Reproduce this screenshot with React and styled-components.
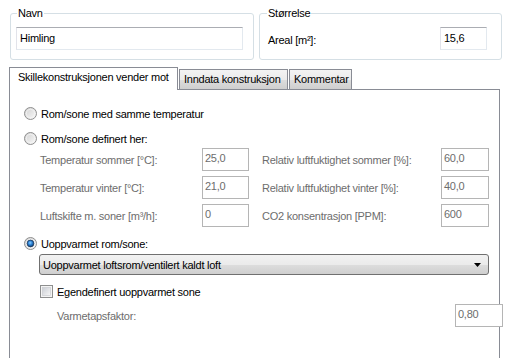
import {Fragment} from 'react'
import styled, {createGlobalStyle} from 'styled-components'

const GlobalStyle = createGlobalStyle`
  html, body {
    margin: 0;
    background: #ffffff;
  }
  body {
    font-family: 'Liberation Sans', Arial, sans-serif;
    font-size: 11px;
    letter-spacing: -0.25px;
    color: #000000;
  }
`

// --- Layout ---
const Page = styled.div`
  width: 516px;
  height: 358px;
  overflow: hidden;
  padding-left: 9px;
  box-sizing: border-box;
`

const TopRow = styled.div`
  display: flex;
  gap: 5px;
  margin-left: 1px;
`

const GroupBox = styled.fieldset`
  margin: 6px 0 0;
  padding: 7px ${({$padRight}) => $padRight}px 9px ${({$padLeft}) => $padLeft}px;
  width: ${({$w}) => $w}px;
  min-width: 0;
  box-sizing: border-box;
  border: 1px solid #d5dfe5;
  border-radius: 3px;
`

const Legend = styled.legend`
  margin-left: ${({$offset}) => $offset}px;
  padding: 0 1px;
  line-height: 14px;
  font-size: 11px;
`

const FieldRow = styled.div`
  display: flex;
  align-items: center;
  justify-content: space-between;
`

const Label = styled.span`
  white-space: nowrap;
  color: ${({$disabled}) => ($disabled ? '#6d6d6d' : '#000000')};
  padding-left: ${({$indent}) => $indent || 0}px;
  margin-top: ${({$drop}) => $drop || 0}px;
`

const TextBox = styled.div`
  width: ${({$w}) => $w}px;
  height: 23px;
  box-sizing: border-box;
  background: #ffffff;
  border: 1px solid;
  border-color: ${({$disabled}) =>
    $disabled ? '#b5b5b5' : '#abadb3 #e3e9ef #e3e9ef #e2e3ea'};
  color: ${({$disabled}) => ($disabled ? '#6d6d6d' : '#000000')};
  padding: ${({$disabled}) => ($disabled ? '3px 0 0 2px' : '0 0 0 3px')};
  line-height: ${({$disabled}) => ($disabled ? '13px' : '21px')};
  white-space: nowrap;
`

// --- Tabs ---
const TabStrip = styled.div`
  display: flex;
  align-items: flex-end;
  margin-top: 7px;
  height: 22px;
`

const Tab = styled.div`
  position: relative;
  width: ${({$w}) => $w}px;
  box-sizing: border-box;
  border: 1px solid #898c95;
  border-bottom: none;
  white-space: nowrap;
  ${({$active}) =>
    $active
      ? `
    height: 23px;
    margin-bottom: -1px;
    z-index: 1;
    background: #ffffff;
    padding: 3px 0 0 8px;
  `
      : `
    height: 20px;
    background: linear-gradient(#f3f3f3 0%, #ebebeb 50%, #dddddd 51%, #cfcfcf 100%);
    padding: 3px 0 0 4px;
    margin-left: 1px;
  `}
`

const TabPanel = styled.div`
  border: 1px solid #898c95;
  width: 491px;
  height: 300px;
  box-sizing: border-box;
  padding: 17px 0 0 14px;
  display: flex;
  flex-direction: column;
`

const OptionRow = styled.div`
  display: flex;
  align-items: center;
  gap: 4px;
  height: 13px;
  margin-top: ${({$mt}) => $mt || 0}px;
  margin-left: ${({$ml}) => $ml || 0}px;
`

const FieldGrid = styled.div`
  display: grid;
  grid-template-columns: 162px 47px 192px 48px;
  grid-auto-rows: 23px;
  row-gap: 5px;
  align-items: center;
  margin: 3px 0 0 16px;
`

const Dropdown = styled.div`
  display: flex;
  align-items: center;
  justify-content: space-between;
  width: 450px;
  height: 21px;
  box-sizing: border-box;
  margin: 4px 0 0 15px;
  padding: 0 7px 0 3px;
  border: 1px solid #707070;
  border-radius: 3px;
  background: linear-gradient(#f2f2f2 0%, #ebebeb 50%, #dddddd 51%, #cfcfcf 100%);
`

const FactorRow = styled.div`
  display: flex;
  align-items: center;
  justify-content: space-between;
  width: 446px;
  margin: 6px 0 0 33px;
`

// --- Icons ---
const Radio = ({checked}) => (
  <svg width="13" height="13" viewBox="0 0 13 13">
    <defs>
      <linearGradient id="radioFill" x1="0" y1="0" x2="1" y2="1">
        <stop offset="0" stopColor="#cfcfcf" />
        <stop offset="1" stopColor="#fbfbfb" />
      </linearGradient>
      <radialGradient id="radioDot" cx="0.45" cy="0.4" r="0.6">
        <stop offset="0" stopColor="#8ad0ff" />
        <stop offset="0.5" stopColor="#2a7fd4" />
        <stop offset="1" stopColor="#0e3a6b" />
      </radialGradient>
    </defs>
    <circle cx="6.5" cy="6.5" r="6" fill="url(#radioFill)" stroke="#8f8f8f" />
    <circle cx="6.5" cy="6.5" r="4.2" fill="none" stroke="#f4f4f4" strokeWidth="0.8" />
    {checked && (
      <circle cx="6.5" cy="6.5" r="3.4" fill="url(#radioDot)" stroke="#1d3654" strokeWidth="0.7" />
    )}
  </svg>
)

const CheckBox = () => (
  <svg width="13" height="13" viewBox="0 0 13 13">
    <defs>
      <linearGradient id="checkFill" x1="0" y1="0" x2="1" y2="1">
        <stop offset="0" stopColor="#cbcfd5" />
        <stop offset="1" stopColor="#f7f7f7" />
      </linearGradient>
    </defs>
    <rect x="0.5" y="0.5" width="12" height="12" fill="#f4f4f4" stroke="#8e8f8f" />
    <rect x="2.5" y="2.5" width="8" height="8" fill="url(#checkFill)" stroke="#c6c9ce" strokeWidth="0.6" />
  </svg>
)

const DropArrow = () => (
  <svg width="7" height="4" viewBox="0 0 7 4">
    <path d="M0 0 H7 L3.5 4 Z" fill="#000000" />
  </svg>
)

const rows = [
  ['Temperatur sommer [°C]:', '25,0', 'Relativ luftfuktighet sommer [%]:', '60,0'],
  ['Temperatur vinter [°C]:', '21,0', 'Relativ luftfuktighet vinter [%]:', '40,0'],
  ['Luftskifte m. soner [m³/h]:', '0', 'CO2 konsentrasjon [PPM]:', '600'],
]

const App = () => (
  <Page>
    <GlobalStyle />
    <TopRow>
      <GroupBox $w={244} $padLeft={5} $padRight={5}>
        <Legend $offset={1}>Navn</Legend>
        <TextBox $w={227}>Himling</TextBox>
      </GroupBox>
      <GroupBox $w={243} $padLeft={8} $padRight={14}>
        <Legend $offset={-1}>Størrelse</Legend>
        <FieldRow>
          <Label $drop={3}>Areal [m²]:</Label>
          <TextBox $w={47}>15,6</TextBox>
        </FieldRow>
      </GroupBox>
    </TopRow>

    <TabStrip>
      <Tab $active $w={169}>Skillekonstruksjonen vender mot</Tab>
      <Tab $w={109}>Inndata konstruksjon</Tab>
      <Tab $w={63}>Kommentar</Tab>
    </TabStrip>
    <TabPanel>
      <OptionRow>
        <Radio />
        <span>Rom/sone med samme temperatur</span>
      </OptionRow>
      <OptionRow $mt={12}>
        <Radio />
        <span>Rom/sone definert her:</span>
      </OptionRow>
      <FieldGrid>
        {rows.map(([l1, v1, l2, v2]) => (
          <Fragment key={l1}>
            <Label $disabled>{l1}</Label>
            <TextBox $w={47} $disabled>{v1}</TextBox>
            <Label $disabled $indent={13}>{l2}</Label>
            <TextBox $w={48} $disabled>{v2}</TextBox>
          </Fragment>
        ))}
      </FieldGrid>
      <OptionRow $mt={10}>
        <Radio checked />
        <span>Uoppvarmet rom/sone:</span>
      </OptionRow>
      <Dropdown>
        <span>Uoppvarmet loftsrom/ventilert kaldt loft</span>
        <DropArrow />
      </Dropdown>
      <OptionRow $mt={10} $ml={16}>
        <CheckBox />
        <span>Egendefinert uoppvarmet sone</span>
      </OptionRow>
      <FactorRow>
        <Label $disabled>Varmetapsfaktor:</Label>
        <TextBox $w={48} $disabled>0,80</TextBox>
      </FactorRow>
    </TabPanel>
  </Page>
)

export default App
